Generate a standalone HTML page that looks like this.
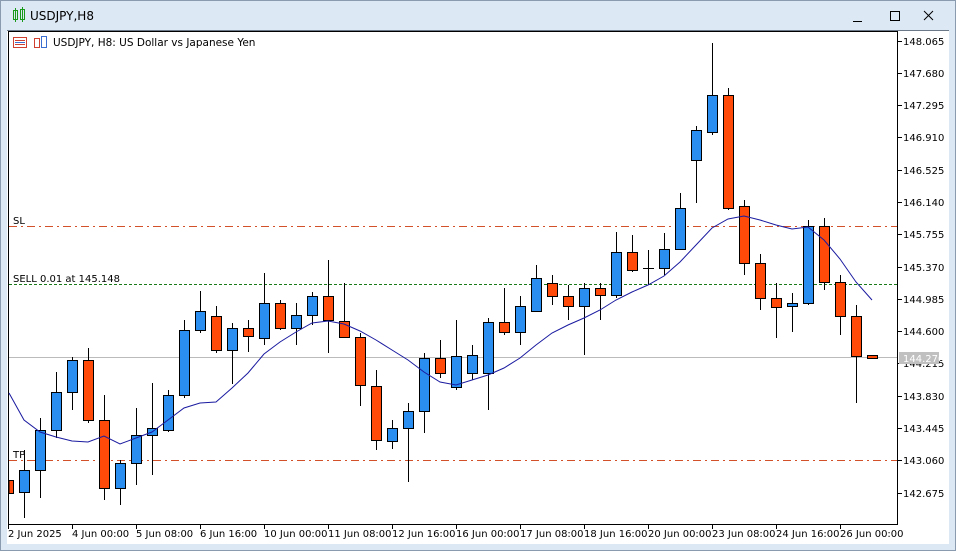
<!DOCTYPE html>
<html><head><meta charset="utf-8"><style>
html,body{margin:0;padding:0;width:956px;height:551px;overflow:hidden;background:#dde8f5;font-family:Tahoma,"DejaVu Sans","Liberation Sans",sans-serif}
svg text{font-family:Tahoma,"DejaVu Sans","Liberation Sans",sans-serif}
</style></head><body>
<svg width="956" height="551" viewBox="0 0 956 551" xmlns="http://www.w3.org/2000/svg" shape-rendering="crispEdges">
<rect x="0" y="0" width="956" height="551" fill="#dde8f5"/>
<rect x="0.5" y="0.5" width="955" height="550" fill="none" stroke="#8a9bb0"/>
<!-- title -->
<g stroke="#1a9a1a" fill="none"><rect x="13.5" y="10.5" width="4" height="9"/><line x1="15.5" y1="8" x2="15.5" y2="22"/><rect x="20.5" y="9.5" width="4" height="10"/><line x1="22.5" y1="7" x2="22.5" y2="22"/></g>
<text x="30" y="20" font-size="12" fill="#000">USDJPY,H8</text>
<line x1="853" y1="21.5" x2="862" y2="21.5" stroke="#000"/>
<rect x="890.5" y="11.5" width="9" height="9" fill="none" stroke="#000"/>
<path d="M924 11 L933 20 M933 11 L924 20" stroke="#000" shape-rendering="auto"/>
<!-- chart window -->
<rect x="7" y="30" width="942" height="514" fill="#fff"/>
<line x1="7" y1="30.5" x2="949" y2="30.5" stroke="#6b7888"/>
<rect x="8.5" y="31.5" width="889" height="493" fill="#fff" stroke="#000"/>
<!-- header icons -->
<rect x="13.5" y="37.5" width="13" height="10" fill="#fff" stroke="#d04030"/>
<line x1="15" y1="40.5" x2="25" y2="40.5" stroke="#d04030"/><line x1="15" y1="42.5" x2="25" y2="42.5" stroke="#3a6ed0"/><line x1="15" y1="44.5" x2="25" y2="44.5" stroke="#d04030"/>
<rect x="34.5" y="38.5" width="5" height="9" fill="#fff" stroke="#d04030"/><rect x="41.5" y="36.5" width="5" height="11" fill="#fff" stroke="#3a6ed0"/>
<text x="53" y="46" font-size="10.5" fill="#000">USDJPY, H8:  US Dollar vs Japanese Yen</text>
<!-- level lines -->
<line x1="9" y1="226.5" x2="897" y2="226.5" stroke="#d2502a" stroke-dasharray="8,4,2,4"/>
<text x="13" y="224" font-size="10" fill="#000">SL</text>
<line x1="9" y1="284.5" x2="897" y2="284.5" stroke="#1a7a1a" stroke-dasharray="3,2"/>
<text x="13" y="282" font-size="10" fill="#000">SELL 0.01 at 145.148</text>
<line x1="9" y1="460.5" x2="897" y2="460.5" stroke="#d2502a" stroke-dasharray="8,4,2,4"/>
<text x="13" y="458" font-size="10" fill="#000">TP</text>
<line x1="9" y1="357.5" x2="897" y2="357.5" stroke="#bbbbbb"/>
<!-- candles -->
<g stroke="#000" stroke-width="1">
<line x1="24.5" y1="450" x2="24.5" y2="518"/><rect x="19.5" y="470.5" width="10" height="22" fill="#2a8ef0"/>
<line x1="40.5" y1="418" x2="40.5" y2="498"/><rect x="35.5" y="430.5" width="10" height="40" fill="#2a8ef0"/>
<line x1="56.5" y1="372" x2="56.5" y2="438"/><rect x="51.5" y="392.5" width="10" height="38" fill="#2a8ef0"/>
<line x1="72.5" y1="357" x2="72.5" y2="410"/><rect x="67.5" y="360.5" width="10" height="32" fill="#2a8ef0"/>
<line x1="88.5" y1="348" x2="88.5" y2="423"/><rect x="83.5" y="360.5" width="10" height="60" fill="#ff4a0a"/>
<line x1="104.5" y1="395" x2="104.5" y2="500"/><rect x="99.5" y="420.5" width="10" height="68" fill="#ff4a0a"/>
<line x1="120.5" y1="460" x2="120.5" y2="505"/><rect x="115.5" y="463.5" width="10" height="25" fill="#2a8ef0"/>
<line x1="136.5" y1="408" x2="136.5" y2="485"/><rect x="131.5" y="435.5" width="10" height="28" fill="#2a8ef0"/>
<line x1="152.5" y1="383" x2="152.5" y2="475"/><rect x="147.5" y="428.5" width="10" height="7" fill="#2a8ef0"/>
<line x1="168.5" y1="390" x2="168.5" y2="432"/><rect x="163.5" y="395.5" width="10" height="35" fill="#2a8ef0"/>
<line x1="184.5" y1="320" x2="184.5" y2="398"/><rect x="179.5" y="330.5" width="10" height="65" fill="#2a8ef0"/>
<line x1="200.5" y1="291" x2="200.5" y2="333"/><rect x="195.5" y="311.5" width="10" height="19" fill="#2a8ef0"/>
<line x1="216.5" y1="306" x2="216.5" y2="353"/><rect x="211.5" y="316.5" width="10" height="34" fill="#ff4a0a"/>
<line x1="232.5" y1="323" x2="232.5" y2="384"/><rect x="227.5" y="328.5" width="10" height="22" fill="#2a8ef0"/>
<line x1="248.5" y1="320" x2="248.5" y2="352"/><rect x="243.5" y="328.5" width="10" height="8" fill="#ff4a0a"/>
<line x1="264.5" y1="273" x2="264.5" y2="345"/><rect x="259.5" y="303.5" width="10" height="35" fill="#2a8ef0"/>
<line x1="280.5" y1="300" x2="280.5" y2="330"/><rect x="275.5" y="303.5" width="10" height="25" fill="#ff4a0a"/>
<line x1="296.5" y1="303" x2="296.5" y2="345"/><rect x="291.5" y="315.5" width="10" height="13" fill="#2a8ef0"/>
<line x1="312.5" y1="292" x2="312.5" y2="325"/><rect x="307.5" y="296.5" width="10" height="19" fill="#2a8ef0"/>
<line x1="328.5" y1="260" x2="328.5" y2="353"/><rect x="323.5" y="296.5" width="10" height="24" fill="#ff4a0a"/>
<line x1="344.5" y1="283" x2="344.5" y2="338"/><rect x="339.5" y="321.5" width="10" height="16" fill="#ff4a0a"/>
<line x1="360.5" y1="333" x2="360.5" y2="406"/><rect x="355.5" y="337.5" width="10" height="48" fill="#ff4a0a"/>
<line x1="376.5" y1="370" x2="376.5" y2="450"/><rect x="371.5" y="386.5" width="10" height="54" fill="#ff4a0a"/>
<line x1="392.5" y1="420" x2="392.5" y2="449"/><rect x="387.5" y="428.5" width="10" height="13" fill="#2a8ef0"/>
<line x1="408.5" y1="403" x2="408.5" y2="482"/><rect x="403.5" y="411.5" width="10" height="17" fill="#2a8ef0"/>
<line x1="424.5" y1="353" x2="424.5" y2="433"/><rect x="419.5" y="358.5" width="10" height="53" fill="#2a8ef0"/>
<line x1="440.5" y1="340" x2="440.5" y2="378"/><rect x="435.5" y="358.5" width="10" height="15" fill="#ff4a0a"/>
<line x1="456.5" y1="320" x2="456.5" y2="390"/><rect x="451.5" y="356.5" width="10" height="31" fill="#2a8ef0"/>
<line x1="472.5" y1="345" x2="472.5" y2="380"/><rect x="467.5" y="355.5" width="10" height="18" fill="#2a8ef0"/>
<line x1="488.5" y1="318" x2="488.5" y2="410"/><rect x="483.5" y="322.5" width="10" height="51" fill="#2a8ef0"/>
<line x1="504.5" y1="288" x2="504.5" y2="335"/><rect x="499.5" y="322.5" width="10" height="10" fill="#ff4a0a"/>
<line x1="520.5" y1="296" x2="520.5" y2="345"/><rect x="515.5" y="306.5" width="10" height="26" fill="#2a8ef0"/>
<line x1="536.5" y1="265" x2="536.5" y2="312"/><rect x="531.5" y="278.5" width="10" height="33" fill="#2a8ef0"/>
<line x1="552.5" y1="275" x2="552.5" y2="305"/><rect x="547.5" y="283.5" width="10" height="13" fill="#ff4a0a"/>
<line x1="568.5" y1="285" x2="568.5" y2="320"/><rect x="563.5" y="296.5" width="10" height="10" fill="#ff4a0a"/>
<line x1="584.5" y1="283" x2="584.5" y2="355"/><rect x="579.5" y="288.5" width="10" height="18" fill="#2a8ef0"/>
<line x1="600.5" y1="283" x2="600.5" y2="320"/><rect x="595.5" y="288.5" width="10" height="7" fill="#ff4a0a"/>
<line x1="616.5" y1="232" x2="616.5" y2="298"/><rect x="611.5" y="252.5" width="10" height="43" fill="#2a8ef0"/>
<line x1="632.5" y1="235" x2="632.5" y2="272"/><rect x="627.5" y="252.5" width="10" height="18" fill="#ff4a0a"/>
<line x1="648.5" y1="250" x2="648.5" y2="285"/><line x1="643" y1="268.5" x2="654" y2="268.5"/>
<line x1="664.5" y1="233" x2="664.5" y2="275"/><rect x="659.5" y="249.5" width="10" height="19" fill="#2a8ef0"/>
<line x1="680.5" y1="193" x2="680.5" y2="250"/><rect x="675.5" y="208.5" width="10" height="41" fill="#2a8ef0"/>
<line x1="696.5" y1="126" x2="696.5" y2="203"/><rect x="691.5" y="130.5" width="10" height="30" fill="#2a8ef0"/>
<line x1="712.5" y1="43" x2="712.5" y2="135"/><rect x="707.5" y="95.5" width="10" height="37" fill="#2a8ef0"/>
<line x1="728.5" y1="88" x2="728.5" y2="210"/><rect x="723.5" y="95.5" width="10" height="113" fill="#ff4a0a"/>
<line x1="744.5" y1="200" x2="744.5" y2="275"/><rect x="739.5" y="206.5" width="10" height="57" fill="#ff4a0a"/>
<line x1="760.5" y1="254" x2="760.5" y2="310"/><rect x="755.5" y="263.5" width="10" height="35" fill="#ff4a0a"/>
<line x1="776.5" y1="283" x2="776.5" y2="338"/><rect x="771.5" y="298.5" width="10" height="9" fill="#ff4a0a"/>
<line x1="792.5" y1="293" x2="792.5" y2="332"/><rect x="787.5" y="303.5" width="10" height="3" fill="#2a8ef0"/>
<line x1="808.5" y1="220" x2="808.5" y2="305"/><rect x="803.5" y="226.5" width="10" height="77" fill="#2a8ef0"/>
<line x1="824.5" y1="218" x2="824.5" y2="290"/><rect x="819.5" y="226.5" width="10" height="56" fill="#ff4a0a"/>
<line x1="840.5" y1="275" x2="840.5" y2="335"/><rect x="835.5" y="282.5" width="10" height="34" fill="#ff4a0a"/>
<line x1="856.5" y1="305" x2="856.5" y2="403"/><rect x="851.5" y="316.5" width="10" height="40" fill="#ff4a0a"/>
<rect x="867.5" y="355.5" width="10" height="3" fill="#ff4a0a"/>
<rect x="9" y="480.5" width="4.5" height="13" fill="#ff4a0a"/>
</g>
<!-- MA -->
<polyline fill="none" stroke="#1a1aa0" stroke-width="1" shape-rendering="auto" points="9,393 24,420 40,432 56,437 72,441 88,442 104,436 120,444 136,438 152,432 168,420 184,408 200,403 216,402 232,388 248,373 264,354 280,342 296,332 312,323 328,321 344,324 360,331 376,340 392,350 408,360 424,372 440,382 456,385 472,380 488,375 504,368 520,358 536,345 552,333 568,325 584,318 600,310 616,300 632,292 648,285 664,276 680,262 696,245 712,228 728,219 744,216 760,220 776,225 792,229 808,227 824,240 840,259 856,282 872,300"/>
<!-- price axis -->
<g stroke="#000"><line x1="897" y1="41.5" x2="902" y2="41.5"/><line x1="897" y1="73.5" x2="902" y2="73.5"/><line x1="897" y1="105.5" x2="902" y2="105.5"/><line x1="897" y1="137.5" x2="902" y2="137.5"/><line x1="897" y1="170.5" x2="902" y2="170.5"/><line x1="897" y1="202.5" x2="902" y2="202.5"/><line x1="897" y1="234.5" x2="902" y2="234.5"/><line x1="897" y1="267.5" x2="902" y2="267.5"/><line x1="897" y1="299.5" x2="902" y2="299.5"/><line x1="897" y1="331.5" x2="902" y2="331.5"/><line x1="897" y1="363.5" x2="902" y2="363.5"/><line x1="897" y1="396.5" x2="902" y2="396.5"/><line x1="897" y1="428.5" x2="902" y2="428.5"/><line x1="897" y1="460.5" x2="902" y2="460.5"/><line x1="897" y1="493.5" x2="902" y2="493.5"/></g>
<g font-size="10" fill="#000">
<text x="903" y="45">148.065</text><text x="903" y="77">147.680</text><text x="903" y="109">147.295</text><text x="903" y="141">146.910</text><text x="903" y="174">146.525</text><text x="903" y="206">146.140</text><text x="903" y="238">145.755</text><text x="903" y="271">145.370</text><text x="903" y="303">144.985</text><text x="903" y="335">144.600</text><text x="903" y="367">144.215</text><text x="903" y="400">143.830</text><text x="903" y="432">143.445</text><text x="903" y="464">143.060</text><text x="903" y="497">142.675</text>
</g>
<rect x="899" y="352" width="40" height="12" fill="#c0c0c0"/>
<text x="903" y="362" font-size="10" fill="#fff">144.270</text>
<!-- time axis -->
<g stroke="#000"><line x1="8.5" y1="524" x2="8.5" y2="529"/><line x1="72.5" y1="524" x2="72.5" y2="529"/><line x1="136.5" y1="524" x2="136.5" y2="529"/><line x1="200.5" y1="524" x2="200.5" y2="529"/><line x1="264.5" y1="524" x2="264.5" y2="529"/><line x1="328.5" y1="524" x2="328.5" y2="529"/><line x1="392.5" y1="524" x2="392.5" y2="529"/><line x1="456.5" y1="524" x2="456.5" y2="529"/><line x1="520.5" y1="524" x2="520.5" y2="529"/><line x1="584.5" y1="524" x2="584.5" y2="529"/><line x1="648.5" y1="524" x2="648.5" y2="529"/><line x1="712.5" y1="524" x2="712.5" y2="529"/><line x1="776.5" y1="524" x2="776.5" y2="529"/><line x1="840.5" y1="524" x2="840.5" y2="529"/></g>
<g font-size="10" fill="#000">
<text x="8" y="537">2 Jun 2025</text><text x="72" y="537">4 Jun 00:00</text><text x="136" y="537">5 Jun 08:00</text><text x="200" y="537">6 Jun 16:00</text><text x="264" y="537">10 Jun 00:00</text><text x="328" y="537">11 Jun 08:00</text><text x="392" y="537">12 Jun 16:00</text><text x="456" y="537">16 Jun 00:00</text><text x="520" y="537">17 Jun 08:00</text><text x="584" y="537">18 Jun 16:00</text><text x="648" y="537">20 Jun 00:00</text><text x="712" y="537">23 Jun 08:00</text><text x="776" y="537">24 Jun 16:00</text><text x="840" y="537">26 Jun 00:00</text>
</g>
</svg>
</body></html>
